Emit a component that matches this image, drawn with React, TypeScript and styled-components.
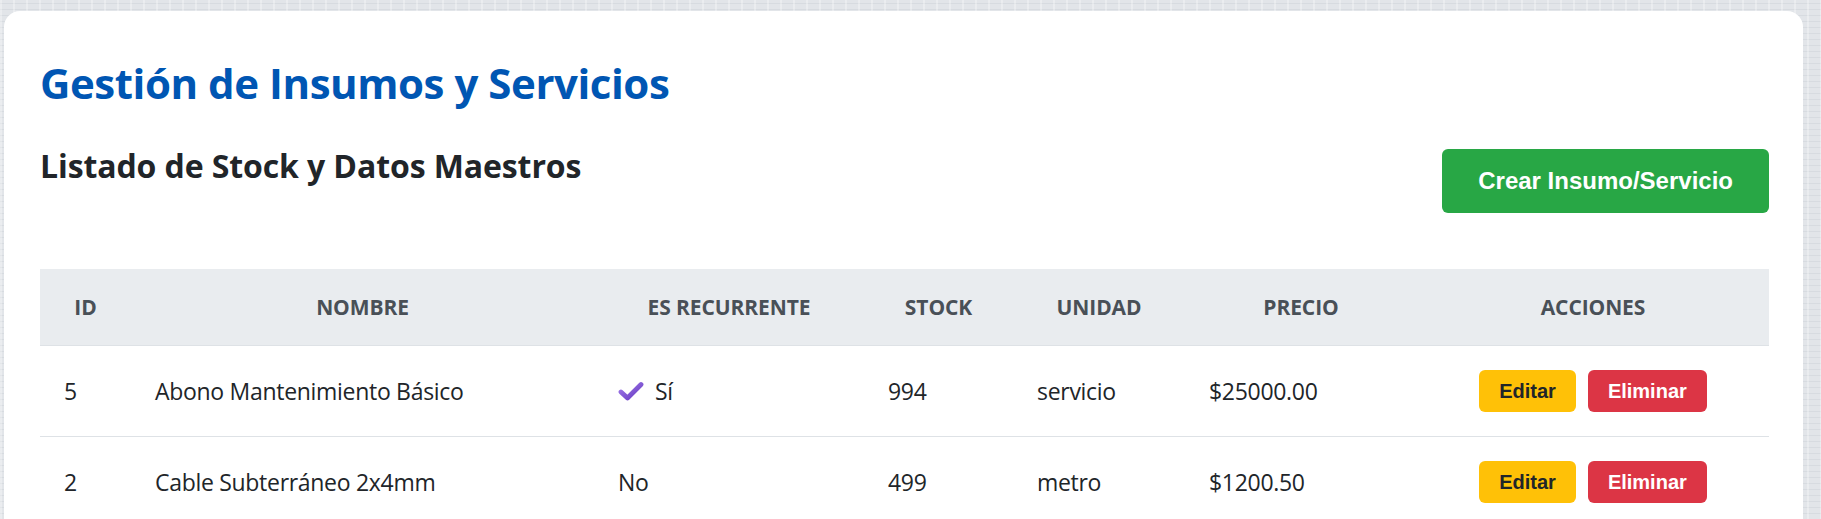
import React from "react";
import styled, { createGlobalStyle } from "styled-components";

const GlobalStyle = createGlobalStyle`
  html, body {
    margin: 0;
    padding: 0;
  }
  body {
    font-family: "Open Sans", "Noto Sans", sans-serif;
    background-color: #e2e5e9;
    background-image:
      repeating-linear-gradient(90deg, rgba(255,255,255,0.3) 0px, rgba(255,255,255,0.3) 2px, rgba(0,0,0,0) 2px, rgba(0,0,0,0) 13px),
      repeating-linear-gradient(0deg, rgba(150,158,168,0.14) 0px, rgba(150,158,168,0.14) 1px, rgba(0,0,0,0) 1px, rgba(0,0,0,0) 6px);
    color: #212529;
  }
`;

const Page = styled.div`
  padding: 11px 18px 0 4px;
`;

const Card = styled.main`
  background: #ffffff;
  border-radius: 16px 16px 0 0;
  padding: 47px 34px 40px 36px;
  min-height: 520px;
  box-sizing: border-box;
`;

const Title = styled.h1`
  margin: 0;
  font-family: "Open Sans", sans-serif;
  font-weight: 700;
  font-size: 42px;
  line-height: 1.2;
  letter-spacing: -0.45px;
  color: #0056b3;
`;

const Toolbar = styled.div`
  display: flex;
  justify-content: space-between;
  align-items: flex-start;
  margin-top: 39px;
`;

const Subtitle = styled.h2`
  margin: 0;
  font-family: "Open Sans", sans-serif;
  font-weight: 700;
  font-size: 32px;
  line-height: 1.2;
  letter-spacing: -0.1px;
  color: #212529;
`;

const PrimaryButton = styled.button`
  font-family: "Liberation Sans", Arial, sans-serif;
  font-weight: 700;
  font-size: 24px;
  line-height: 28px;
  color: #ffffff;
  background: #28a745;
  border: none;
  border-radius: 6px;
  padding: 18px 36px;
  cursor: pointer;
  margin-top: 2px;
`;

const Table = styled.table`
  width: 100%;
  border-collapse: collapse;
  table-layout: fixed;
  margin-top: 56px;
`;

const HeadCell = styled.th`
  background: #e9ecef;
  color: #495057;
  font-family: "Open Sans", sans-serif;
  font-weight: 700;
  font-size: 21px;
  letter-spacing: -0.1px;
  line-height: 28px;
  text-transform: uppercase;
  text-align: center;
  padding: 24px 8px;
  border-bottom: 1px solid #dee2e6;
  white-space: nowrap;
`;

const Cell = styled.td`
  font-family: "Open Sans", sans-serif;
  font-size: 23px;
  letter-spacing: -0.3px;
  color: #212529;
  height: 90px;
  padding: 0 24px;
  vertical-align: middle;
  border-bottom: 1px solid #dee2e6;
  white-space: nowrap;
`;

const ActionCell = styled(Cell)`
  text-align: center;
`;

const Actions = styled.div`
  display: inline-flex;
  gap: 12px;
  align-items: center;
`;

const SmallButton = styled.button<{ $variant: "warning" | "danger" }>`
  font-family: "Liberation Sans", Arial, sans-serif;
  font-weight: 700;
  font-size: 20px;
  height: 42px;
  padding: 0 20px;
  border: none;
  border-radius: 6px;
  cursor: pointer;
  background: ${(p) => (p.$variant === "warning" ? "#ffc107" : "#dc3545")};
  color: ${(p) => (p.$variant === "warning" ? "#212529" : "#ffffff")};
`;

const Recurrent = styled.span`
  display: inline-flex;
  align-items: center;
  gap: 11px;
`;

const CheckIcon = () => (
  <svg width="26" height="20" viewBox="0 0 26 20" aria-hidden="true">
    <defs>
      <linearGradient id="chk" x1="0" y1="0" x2="1" y2="1">
        <stop offset="0" stopColor="#a07ae8" />
        <stop offset="1" stopColor="#6639c2" />
      </linearGradient>
    </defs>
    <path
      d="M3 11 L9.5 17 L23 3.5"
      fill="none"
      stroke="url(#chk)"
      strokeWidth="4.8"
      strokeLinecap="round"
      strokeLinejoin="round"
    />
  </svg>
);

type Item = {
  id: number;
  nombre: string;
  recurrente: boolean;
  stock: number;
  unidad: string;
  precio: string;
};

const items: Item[] = [
  { id: 5, nombre: "Abono Mantenimiento Básico", recurrente: true, stock: 994, unidad: "servicio", precio: "$25000.00" },
  { id: 2, nombre: "Cable Subterráneo 2x4mm", recurrente: false, stock: 499, unidad: "metro", precio: "$1200.50" },
];

const columns = [
  { label: "ID", width: 91 },
  { label: "Nombre", width: 463 },
  { label: "Es Recurrente", width: 270 },
  { label: "Stock", width: 149 },
  { label: "Unidad", width: 172 },
  { label: "Precio", width: 232 },
  { label: "Acciones", width: 352 },
];

export default function App() {
  return (
    <>
      <GlobalStyle />
      <Page>
        <Card>
          <Title>Gestión de Insumos y Servicios</Title>
          <Toolbar>
            <Subtitle>Listado de Stock y Datos Maestros</Subtitle>
            <PrimaryButton>Crear Insumo/Servicio</PrimaryButton>
          </Toolbar>
          <Table>
            <colgroup>
              {columns.map((c) => (
                <col key={c.label} style={{ width: c.width }} />
              ))}
            </colgroup>
            <thead>
              <tr>
                {columns.map((c) => (
                  <HeadCell key={c.label}>{c.label}</HeadCell>
                ))}
              </tr>
            </thead>
            <tbody>
              {items.map((it) => (
                <tr key={it.id}>
                  <Cell>{it.id}</Cell>
                  <Cell>{it.nombre}</Cell>
                  <Cell>
                    {it.recurrente ? (
                      <Recurrent>
                        <CheckIcon />
                        Sí
                      </Recurrent>
                    ) : (
                      "No"
                    )}
                  </Cell>
                  <Cell>{it.stock}</Cell>
                  <Cell>{it.unidad}</Cell>
                  <Cell>{it.precio}</Cell>
                  <ActionCell>
                    <Actions>
                      <SmallButton $variant="warning">Editar</SmallButton>
                      <SmallButton $variant="danger">Eliminar</SmallButton>
                    </Actions>
                  </ActionCell>
                </tr>
              ))}
            </tbody>
          </Table>
        </Card>
      </Page>
    </>
  );
}
